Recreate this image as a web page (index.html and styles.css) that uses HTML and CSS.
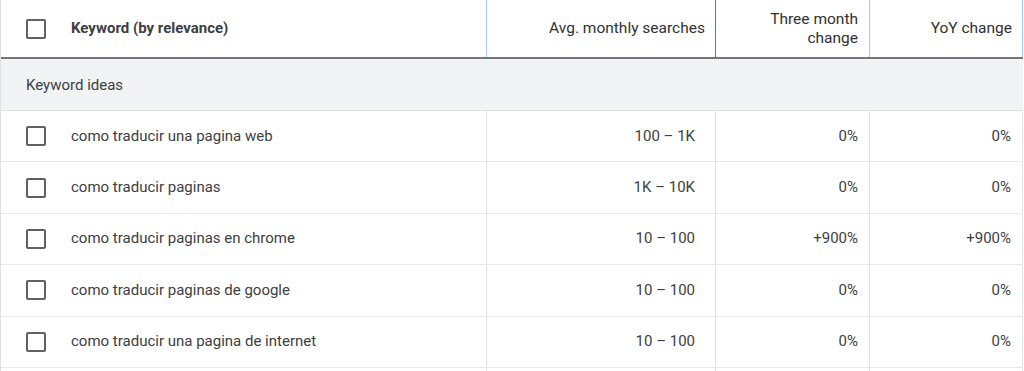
FILE: index.html
```html
<!DOCTYPE html>
<html lang="en">
<head>
<meta charset="utf-8">
<title>Keyword ideas</title>
<link rel="stylesheet" href="styles.css">
</head>
<body>
<div class="table">
  <div class="row head">
    <div class="cell c1"><span class="box"></span><span class="kw-title">Keyword (by relevance)</span></div>
    <div class="cell num hb1">Avg. monthly searches</div>
    <div class="cell num hb2">Three month<br>change</div>
    <div class="cell num hb3">YoY change</div>
  </div>
  <div class="section">Keyword ideas</div>
  <div class="row data">
    <div class="cell c1"><span class="box"></span><span>como traducir una pagina web</span></div>
    <div class="cell num avg">100 – 1K</div>
    <div class="cell num">0%</div>
    <div class="cell num">0%</div>
  </div>
  <div class="row data">
    <div class="cell c1"><span class="box"></span><span>como traducir paginas</span></div>
    <div class="cell num avg">1K – 10K</div>
    <div class="cell num">0%</div>
    <div class="cell num">0%</div>
  </div>
  <div class="row data">
    <div class="cell c1"><span class="box"></span><span>como traducir paginas en chrome</span></div>
    <div class="cell num avg">10 – 100</div>
    <div class="cell num">+900%</div>
    <div class="cell num">+900%</div>
  </div>
  <div class="row data">
    <div class="cell c1"><span class="box"></span><span>como traducir paginas de google</span></div>
    <div class="cell num avg">10 – 100</div>
    <div class="cell num">0%</div>
    <div class="cell num">0%</div>
  </div>
  <div class="row data">
    <div class="cell c1"><span class="box"></span><span>como traducir una pagina de internet</span></div>
    <div class="cell num avg">10 – 100</div>
    <div class="cell num">0%</div>
    <div class="cell num">0%</div>
  </div>
  <div class="row data filler">
    <div class="cell c1"></div>
    <div class="cell num avg"></div>
    <div class="cell num"></div>
    <div class="cell num"></div>
  </div>
</div>
</body>
</html>
```
FILE: styles.css
```css
* { box-sizing: border-box; }
html, body {
  margin: 0;
  padding: 0;
  background: #ffffff;
  overflow: hidden;
}
body {
  font-family: Roboto, "Liberation Sans", Arial, sans-serif;
  font-size: 15px;
  color: #3c4043;
}
.table {
  width: 1023px;
  border-left: 1px solid #e0e0e0;
}
.row {
  display: grid;
  grid-template-columns: 486px 229px 154px 153px;
}
.cell {
  display: flex;
  align-items: center;
  border-right: 1px solid #e0e0e0;
  line-height: 19px;
}
.c1 {
  padding-left: 25px;
  gap: 25px;
}
.num {
  justify-content: flex-end;
  text-align: right;
  padding-right: 11px;
}
.avg {
  padding-right: 20px;
}
.head {
  height: 59px;
  border-bottom: 2px solid #757575;
}
.head .num { font-size: 15.5px; color: #303134; }
.head .c1 { border-right-color: #a9c6f3; }
.head .hb1 { border-right-color: #3b78d8; padding-right: 10px; }
.head .hb2 { border-right-color: #a9c6f3; }
.head .hb3 { border-right-color: #a9c6f3; padding-right: 10px; }
.kw-title {
  font-weight: 700;
}
.box {
  flex: none;
  width: 20px;
  height: 20px;
  border: 2px solid #616161;
  border-radius: 2px;
}
.section {
  height: 52px;
  background: #f1f3f4;
  border-bottom: 1px solid #e0e0e0;
  display: flex;
  align-items: center;
  padding-left: 25px;
}
.data {
  height: 51.4px;
  border-bottom: 1px solid #e8e8e8;
}
```
